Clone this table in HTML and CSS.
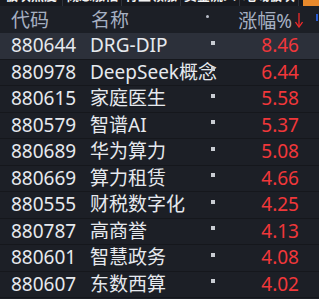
FILE: index.html
```html
<!DOCTYPE html>
<html lang="zh">
<head>
<meta charset="utf-8">
<link rel="stylesheet" href="styles.css">
</head>
<body>
<div class="panel">
  <div class="tabs">
    <div class="tab"><span>板块热度</span></div>
    <div class="tab"><span>概念涨幅</span></div>
    <div class="tab"><span>行业领涨</span></div>
    <div class="tab"><span>资金流入</span></div>
    <div class="tab"><span>地域板块</span></div>
    <div class="tab tab-active"></div>
  </div>
  <div class="head">
    <span class="c-code">代码</span>
    <span class="c-name">名称</span>
    <span class="dot"></span>
    <span class="c-val">涨幅%</span>
    <svg class="arrow" width="8" height="15" viewBox="0 0 8 15"><path d="M4 0V13" stroke="#f02a2a" stroke-width="1.3"/><path d="M0.5 9L4 14L7.5 9" fill="none" stroke="#f02a2a" stroke-width="1.3"/></svg>
    <span class="edge"></span>
  </div>
  <div class="rows">
    <div class="row sel"><span class="c-code">880644</span><span class="c-name">DRG-DIP</span><span class="sq"></span><span class="c-val">8.46</span></div>
    <div class="row"><span class="c-code">880978</span><span class="c-name">DeepSeek概念</span><span class="sq"></span><span class="c-val">6.44</span></div>
    <div class="row"><span class="c-code">880615</span><span class="c-name">家庭医生</span><span class="sq"></span><span class="c-val">5.58</span></div>
    <div class="row"><span class="c-code">880579</span><span class="c-name">智谱AI</span><span class="sq"></span><span class="c-val">5.37</span></div>
    <div class="row"><span class="c-code">880689</span><span class="c-name">华为算力</span><span class="sq"></span><span class="c-val">5.08</span></div>
    <div class="row"><span class="c-code">880669</span><span class="c-name">算力租赁</span><span class="sq"></span><span class="c-val">4.66</span></div>
    <div class="row"><span class="c-code">880555</span><span class="c-name">财税数字化</span><span class="sq"></span><span class="c-val">4.25</span></div>
    <div class="row"><span class="c-code">880787</span><span class="c-name">高商誉</span><span class="sq"></span><span class="c-val">4.13</span></div>
    <div class="row"><span class="c-code">880601</span><span class="c-name">智慧政务</span><span class="sq"></span><span class="c-val">4.08</span></div>
    <div class="row"><span class="c-code">880607</span><span class="c-name">东数西算</span><span class="sq"></span><span class="c-val">4.02</span></div>
  </div>
</div>
</body>
</html>
```

FILE: styles.css
```css
html, body {
  margin: 0;
  padding: 0;
  background: #1c1f26;
}
.panel {
  width: 319px;
  height: 299px;
  overflow: hidden;
  background: #1c1f26;
  font-family: "Noto Sans", "Noto Sans CJK SC", sans-serif;
  font-size: 19px;
  color: #e6e9ee;
}
.tabs {
  display: flex;
  height: 6px;
  overflow: hidden;
  background: #17191f;
}
.tab {
  width: 58px;
  border-right: 1px solid #2e323b;
  overflow: hidden;
  display: flex;
  justify-content: center;
}
.tab:first-child {
  width: 62px;
}
.tab span {
  display: block;
  font-size: 13px;
  font-weight: bold;
  line-height: 13px;
  height: 13px;
  margin-top: -11px;
  color: #f2f2f2;
  white-space: nowrap;
}
.tab-active {
  flex: 1;
  border-right: none;
  margin-left: 4px;
  background: #e8892c;
}
.head {
  position: relative;
  display: grid;
  grid-template-columns: 80px 115px 3px 86px 8px;
  align-items: center;
  height: 27px;
  padding-left: 11px;
  color: #a6b0c2;
}
.head .c-code, .head .c-name {
  line-height: 27px;
}
.dot {
  width: 3px;
  height: 3px;
  border-radius: 50%;
  background: #b9bec8;
  align-self: start;
  margin-top: 9px;
}
.head .c-val {
  text-align: right;
  padding-right: 3px;
}
.arrow {
  display: block;
  margin-top: 1px;
}
.edge {
  position: absolute;
  right: 1px;
  top: 8px;
  width: 2px;
  height: 7px;
  background: #2a5bd0;
}
.rows {
  display: flex;
  flex-direction: column;
}
.row {
  display: grid;
  grid-template-columns: 79px 121px 4px 84px;
  align-items: center;
  height: 26.5px;
  box-sizing: border-box;
  padding-left: 11px;
  border-bottom: 1px solid #15171c;
}
.row.sel {
  background: #2c303a;
}
.c-code, .c-name {
  white-space: nowrap;
  line-height: 25px;
}
.sq {
  width: 4px;
  height: 4px;
  background: #c9cdd3;
  margin-top: -6px;
}
.row .c-val {
  text-align: right;
  color: #f0373a;
  line-height: 25px;
}
```
